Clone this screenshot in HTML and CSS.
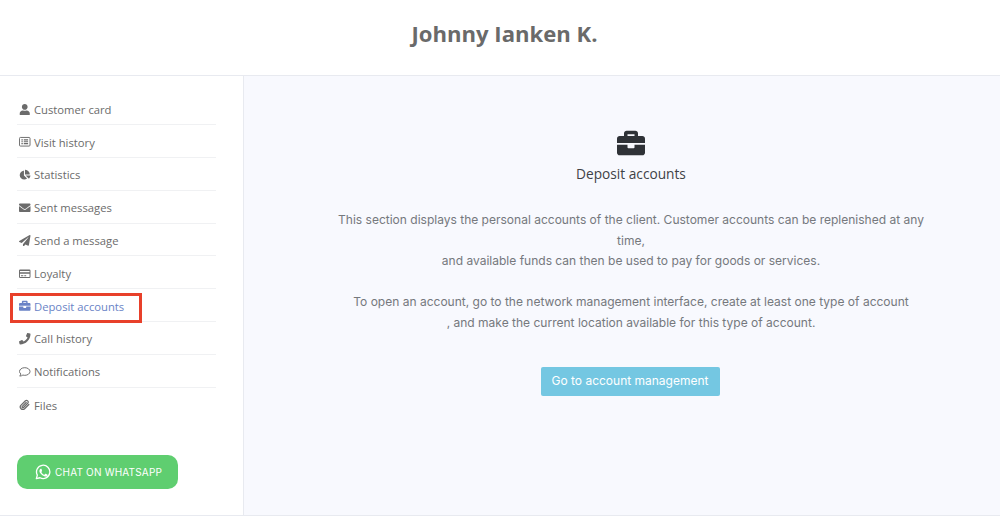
FILE: index.html
```html
<!DOCTYPE html>
<html lang="en">
<head>
    <meta charset="UTF-8">
    <title>Johnny Ianken K. - Deposit accounts</title>
    <link rel="stylesheet" href="styles.css">
</head>
<body>

<header class="page-header">
    <h1>Johnny Ianken K.</h1>
</header>

<div class="layout">
    <aside class="sidebar">
        <ul class="menu">
            <li class="menu-item">
                <svg class="menu-icon" viewBox="0 0 448 512"><path d="M224 256c70.7 0 128-57.3 128-128S294.7 0 224 0 96 57.3 96 128s57.3 128 128 128zm89.6 32h-16.7c-22.2 10.2-46.9 16-72.9 16s-50.6-5.8-72.9-16h-16.7C60.2 288 0 348.2 0 422.4V464c0 26.5 21.5 48 48 48h352c26.5 0 48-21.5 48-48v-41.6c0-74.2-60.2-134.4-134.4-134.4z"/></svg>
                Customer card
            </li>
            <li class="menu-item">
                <svg class="menu-icon" viewBox="0 0 24 24"><rect x="1" y="3" width="22" height="18" rx="2" fill="none" stroke="currentColor" stroke-width="2"/><path d="M5 7h3v2.4H5zM10 7h9v2.4h-9zM5 10.8h3v2.4H5zM10 10.8h9v2.4h-9zM5 14.6h3V17H5zM10 14.6h9V17h-9z"/></svg>
                Visit history
            </li>
            <li class="menu-item">
                <svg class="menu-icon" viewBox="0 0 576 512"><path d="M558.3 288H332.3l150.5 150.5c5.8 5.8 15.2 6.2 21.1.6 36.9-34.8 62.2-81.6 69.7-134.2 1.3-9-6.3-16.9-15.3-16.9zM539.300 223.100C531.500 104.400 439.600 8.500 316.900.7 307.600.1 300 7.900 300 17.200V240h222.800c9.300 0 17.100-7.600 16.500-16.900zM248 288V64.800c0-9-7.900-16.600-16.900-15.300C119.500 65.300 34.200 162.900 36 280.600 37.900 401.500 142.500 500 263.400 499.200c47.500-.3 91.400-15.900 127-42.200 7.400-5.500 7.900-16.300 1.400-22.800L248 288z"/></svg>
                Statistics
            </li>
            <li class="menu-item">
                <svg class="menu-icon" viewBox="0 0 512 512"><path d="M502.300 190.800c3.900-3.100 9.700-.2 9.700 4.700V400c0 26.500-21.500 48-48 48H48c-26.500 0-48-21.500-48-48V195.600c0-5 5.700-7.800 9.700-4.700 22.400 17.400 52.100 39.500 154.100 113.600 21.100 15.400 56.700 47.800 92.200 47.600 35.700.3 72-32.800 92.300-47.600 102-74.100 131.600-96.300 154-113.700zM256 320c23.200.4 56.600-29.200 73.400-41.400 132.700-96.300 142.800-104.700 173.400-128.700 5.800-4.500 9.200-11.500 9.200-18.900v-19c0-26.500-21.500-48-48-48H48C21.500 64 0 85.500 0 112v19c0 7.400 3.400 14.300 9.200 18.900 30.600 23.900 40.700 32.400 173.400 128.700 16.800 12.200 50.200 41.800 73.400 41.400z"/></svg>
                Sent messages
            </li>
            <li class="menu-item">
                <svg class="menu-icon" viewBox="0 0 512 512"><path d="M476 3.200L12.500 270.600c-18.100 10.400-15.800 35.600 2.200 43.200L121 358.400l287.300-253.200c5.500-4.900 13.300 2.600 8.600 8.300L176 407v80.500c0 23.600 28.500 32.900 42.500 15.800L282 426l124.600 52.200c14.200 6 30.400-2.900 33-18.200l72-432C515 7.800 493.300-6.800 476 3.200z"/></svg>
                Send a message
            </li>
            <li class="menu-item">
                <svg class="menu-icon" viewBox="0 0 24 24"><path fill-rule="evenodd" d="M2.500 3h19A2.500 2.500 0 0 1 24 5.500v13a2.500 2.500 0 0 1-2.500 2.500h-19A2.500 2.500 0 0 1 0 18.500v-13A2.500 2.500 0 0 1 2.500 3zM2 6v3h20V6zm0 6v6.500c0 .3.200.5.500.5h19c.3 0 .5-.2.500-.5V12zm2 3h5v2H4zm7 0h4v2h-4z"/></svg>
                Loyalty
            </li>
            <li class="menu-item menu-item-active">
                <svg class="menu-icon" viewBox="0 0 512 512"><path d="M320 336c0 8.840-7.160 16-16 16h-96c-8.840 0-16-7.160-16-16v-48H0v144c0 25.600 22.400 48 48 48h416c25.600 0 48-22.400 48-48V288H320v48zm144-208h-80V80c0-25.600-22.400-48-48-48H176c-25.600 0-48 22.400-48 48v48H48c-25.600 0-48 22.400-48 48v80h512v-80c0-25.600-22.400-48-48-48zm-144 0H192V96h128v32z"/></svg>
                Deposit accounts
                <span class="highlight-box"></span>
            </li>
            <li class="menu-item">
                <svg class="menu-icon" viewBox="0 0 512 512"><path d="M493.400 24.600l-104-24c-11.300-2.600-22.900 3.300-27.500 13.900l-48 112c-4.200 9.800-1.400 21.300 6.900 28l60.600 49.600c-36 76.700-98.900 140.500-177.200 177.200l-49.600-60.600c-6.800-8.300-18.200-11.100-28-6.900l-112 48C3.900 366.500-2 378.100.6 389.400l24 104C27.100 504.200 36.700 512 48 512c256.100 0 464-207.500 464-464 0-11.200-7.700-20.900-18.600-23.400z"/></svg>
                Call history
            </li>
            <li class="menu-item">
                <svg class="menu-icon" viewBox="0 0 24 24"><path fill="none" stroke="currentColor" stroke-width="2" stroke-linejoin="round" d="M12 3.500c6 0 11 3.600 11 8s-5 8-11 8c-1.400 0-2.700-.2-3.900-.6C6.500 20.200 4 21 1.500 21c1.300-1.300 2.200-3 2.400-4.400C2 15.100 1 13.400 1 11.500c0-4.400 5-8 11-8z"/></svg>
                Notifications
            </li>
            <li class="menu-item">
                <svg class="menu-icon" viewBox="0 0 24 24"><path fill="none" stroke="currentColor" stroke-width="2.600" stroke-linecap="round" stroke-linejoin="round" d="M20.500 11.500l-8.800 8.800a5.200 5.200 0 0 1-7.400-7.400l9.200-9.200a3.500 3.500 0 0 1 4.900 4.900l-9.100 9.100a1.700 1.700 0 0 1-2.400-2.400l8.100-8.100"/></svg>
                Files
            </li>
        </ul>

        <a class="whatsapp-btn" href="#">
            <svg class="whatsapp-icon" viewBox="0 0 24 24"><path fill="none" stroke="currentColor" stroke-width="2" stroke-linejoin="round" d="M2 22l1.500-5.400A10 10 0 1 1 7.500 20.600z"/><path d="M9 7c-.4 0-1 .2-1.400.7-.5.500-1 1.300-1 2.700 0 1.500 1.100 3 1.300 3.200.2.200 2.100 3.300 5.200 4.500 2.500 1 3.100.8 3.600.7.600 0 1.800-.7 2-1.400.3-.7.300-1.300.2-1.400-.1-.1-.3-.2-.6-.4l-2.100-1c-.3-.1-.5-.2-.7.100l-1 1.200c-.2.200-.4.300-.7.100-.3-.1-1.300-.5-2.500-1.500-.9-.8-1.500-1.800-1.700-2.100-.2-.3 0-.5.100-.6l.5-.5.300-.5c.1-.2.100-.4 0-.5L10 7.700C9.800 7.100 9.500 7 9.300 7z"/></svg>
            CHAT ON WHATSAPP
        </a>
    </aside>

    <main class="content">
        <div class="empty-state">
            <svg class="empty-icon" viewBox="0 0 512 512"><path d="M320 336c0 8.840-7.160 16-16 16h-96c-8.840 0-16-7.160-16-16v-48H0v144c0 25.600 22.400 48 48 48h416c25.600 0 48-22.400 48-48V288H320v48zm144-208h-80V80c0-25.600-22.400-48-48-48H176c-25.600 0-48 22.400-48 48v48H48c-25.600 0-48 22.400-48 48v80h512v-80c0-25.600-22.400-48-48-48zm-144 0H192V96h128v32z"/></svg>
            <h2>Deposit accounts</h2>
            <p>This section displays the personal accounts of the client. Customer accounts can be replenished at any time,<br>and available funds can then be used to pay for goods or services.</p>
            <p>To open an account, go to the network management interface, create at least one type of account<br>, and make the current location available for this type of account.</p>
            <a class="manage-btn" href="#">Go to account management</a>
        </div>
    </main>
</div>

</body>
</html>
```

FILE: styles.css
```css
* {
    box-sizing: border-box;
}

body {
    margin: 0;
    background-color: #ffffff;
    font-family: "Open Sans", sans-serif;
    overflow: hidden;
}

.page-header {
    height: 76px;
    border-bottom: 1px solid #e8eaf0;
    padding: 16px 0 0 9px;
    text-align: center;
}

.page-header h1 {
    margin: 0;
    font-size: 22.100px;
    line-height: 34px;
    font-weight: 700;
    color: #6a6a6a;
}

.layout {
    display: flex;
    height: 440px;
    border-bottom: 1px solid #e8eaf0;
}

.sidebar {
    width: 244px;
    flex-shrink: 0;
    padding: 16.500px 27px 0 17px;
    border-right: 1px solid #e8eaf0;
}

.menu {
    list-style-type: none;
    margin: 0;
    padding: 0;
}

.menu-item {
    position: relative;
    display: flex;
    align-items: center;
    height: 32.800px;
    padding-top: 2px;
    border-bottom: 1px solid #f0f1f3;
    font-size: 11.250px;
    color: #6b6b6b;
}

.menu-item:last-child {
    border-bottom: none;
}

.menu-icon {
    width: 11.500px;
    height: 11.500px;
    margin: 0 3.500px 0 2px;
    fill: currentColor;
    flex-shrink: 0;
}

.menu-item-active {
    color: #6a83c6;
}

.highlight-box {
    position: absolute;
    left: -7px;
    top: 4px;
    width: 132px;
    height: 30px;
    border: 3px solid #e8402a;
}

.whatsapp-btn {
    display: flex;
    align-items: center;
    gap: 4px;
    width: 161px;
    height: 34px;
    margin-top: 34.500px;
    padding-left: 18px;
    background-color: #5fce70;
    border-radius: 10px;
    color: #ffffff;
    font-family: "Inter", sans-serif;
    font-size: 10px;
    letter-spacing: 0.2px;
    text-decoration: none;
}

.whatsapp-icon {
    width: 16px;
    height: 16px;
    fill: currentColor;
    flex-shrink: 0;
}

.content {
    flex: 1;
    background-color: #f8f9fe;
    padding: 53px 0 0 87px;
}

.empty-state {
    width: 600px;
    text-align: center;
}

.empty-icon {
    display: block;
    width: 28px;
    height: 28px;
    margin: 0 auto;
    fill: #2f3237;
}

.empty-state h2 {
    margin: 7px 0 26px;
    font-size: 13.700px;
    line-height: 20px;
    font-weight: 400;
    color: #3f4246;
}

.empty-state p {
    margin: 0 0 20.500px;
    font-family: "Inter", sans-serif;
    font-size: 12.030px;
    line-height: 20.500px;
    color: #75787d;
}

.manage-btn {
    display: inline-block;
    margin: 13.500px 2px 0 0;
    padding: 0 11px;
    height: 29px;
    line-height: 28px;
    background-color: #74c7e2;
    border-radius: 2px;
    color: #ffffff;
    font-family: "Inter", sans-serif;
    font-size: 12px;
    text-decoration: none;
}
```
